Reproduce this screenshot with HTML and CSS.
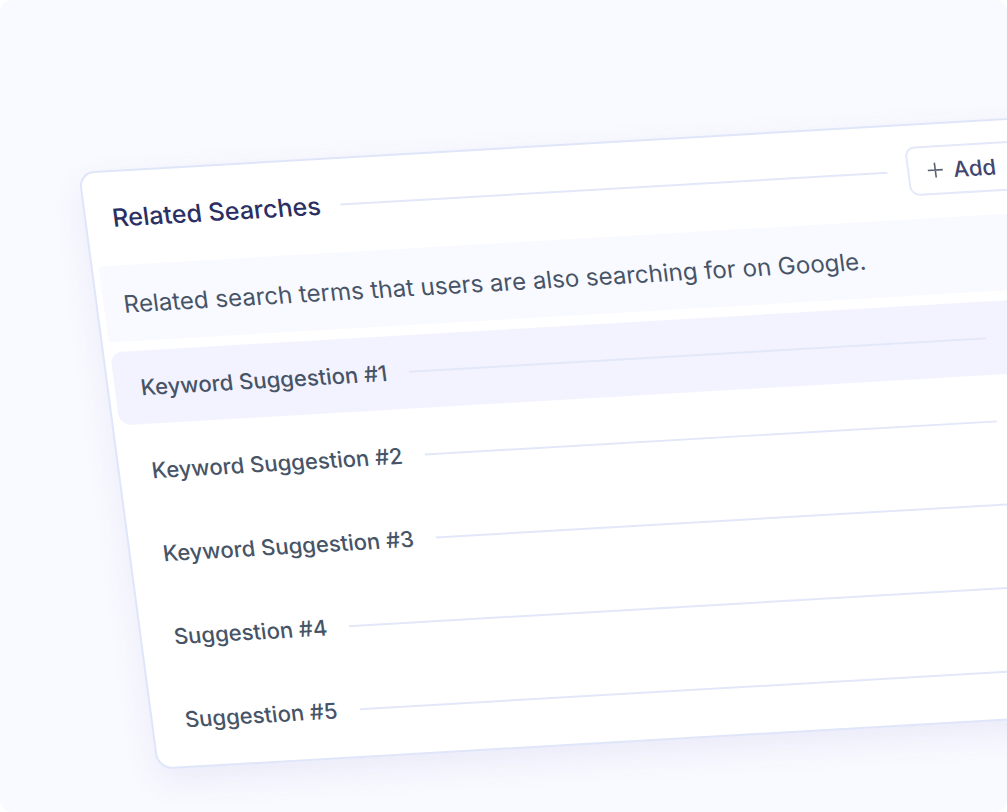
FILE: index.html
```html
<!DOCTYPE html>
<html lang="en">
<head>
<meta charset="utf-8">
<meta name="viewport" content="width=device-width, initial-scale=1">
<title>Related Searches</title>
<link rel="stylesheet" href="styles.css">
</head>
<body>
<main class="stage">
  <section class="panel" aria-labelledby="panel-title">
    <header class="panel-header">
      <h1 class="panel-title" id="panel-title">Related Searches</h1>
      <span class="rule"></span>
      <button class="add-button" type="button">
        <svg class="add-icon" viewBox="0 0 16 16" aria-hidden="true"><path d="M8 0.5v15M0.5 8h15"/></svg>
        Add
      </button>
    </header>
    <p class="description">Related search terms that users are also searching for on Google.</p>
    <ul class="list">
      <li class="row row-active"><span>Keyword Suggestion #1</span><span class="rule"></span></li>
      <li class="row"><span>Keyword Suggestion #2</span><span class="rule"></span></li>
      <li class="row"><span>Keyword Suggestion #3</span><span class="rule"></span></li>
      <li class="row"><span>Suggestion #4</span><span class="rule"></span></li>
      <li class="row"><span>Suggestion #5</span><span class="rule"></span></li>
    </ul>
  </section>
</main>
</body>
</html>
```
FILE: styles.css
```css
* {
  box-sizing: border-box;
}

body {
  margin: 0;
  background: #ffffff;
  font-family: Inter, "Liberation Sans", sans-serif;
  color: #475467;
}

.stage {
  min-height: 100vh;
  padding: 172px 0 0 78px;
  overflow: hidden;
  border-radius: 12px;
  background: #f9faff;
}

/* The panel lies on a tilted plane and runs off the right edge. */
.panel {
  width: 100vw;
  padding: 0 6px 10px;
  border: 2px solid #e0e6f9;
  border-radius: 16px;
  background: #ffffff;
  box-shadow: 0 12px 32px rgba(88, 80, 180, 0.09);
  transform: matrix(1, -0.058, 0.131, 0.988, 0, 0);
  transform-origin: 0 0;
}

.panel-header {
  display: flex;
  align-items: center;
  gap: 20px;
  padding: 21px 24px 23px 20px;
}

.panel-title {
  margin: 0;
  font-size: 25px;
  font-weight: 500;
  line-height: 32px;
  color: #2b2f63;
}

.rule {
  flex: 1;
  height: 2px;
  background: #e2e8f9;
}

.add-button {
  display: flex;
  align-items: center;
  gap: 10px;
  width: 152px;
  height: 50px;
  padding: 0 18px;
  border: 2px solid #e3e8fa;
  border-radius: 10px;
  background: #ffffff;
  font-family: inherit;
  font-size: 22px;
  font-weight: 500;
  color: #42466f;
}

.add-icon {
  width: 16px;
  height: 16px;
  fill: none;
  stroke: #5a6272;
  stroke-width: 1.6;
}

.description {
  margin: 0 0 10px;
  padding: 23px 20px 21px;
  border-radius: 4px;
  background: #f9faff;
  font-size: 24px;
  font-weight: 400;
  line-height: 33px;
  white-space: nowrap;
}

.list {
  display: flex;
  flex-direction: column;
  gap: 10px;
  margin: 0;
  padding: 0;
  list-style: none;
}

.row {
  display: flex;
  align-items: center;
  gap: 22px;
  height: 74px;
  padding: 0 120px 0 26px;
  border-radius: 12px;
  font-size: 22px;
  font-weight: 500;
}

.row-active {
  background: #f3f3ff;
}
```
